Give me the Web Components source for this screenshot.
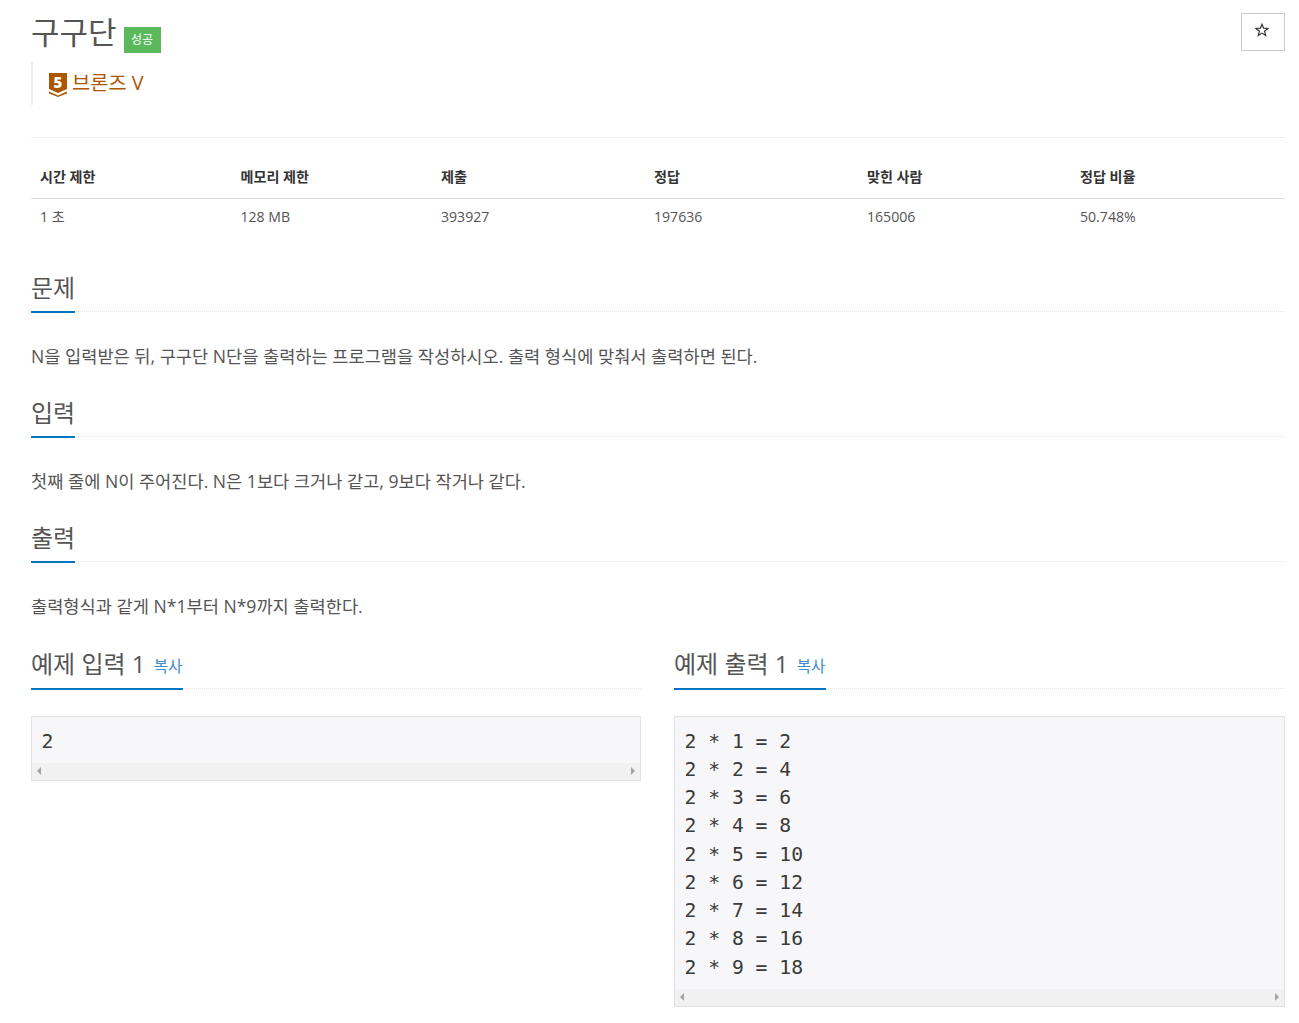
<!DOCTYPE html>
<html lang="ko">
<head>
<meta charset="utf-8">
<style>
html, body { margin: 0; background: #fff; }
body { font-family: "Open Sans", "Noto Sans CJK KR", sans-serif; color: #555; }
</style>
</head>
<body>
<problem-page></problem-page>

<script>
class ProblemHeader extends HTMLElement {
    constructor() {
        super();
        this.attachShadow({ mode: "open" });
    }

    connectedCallback() {
        this.shadowRoot.innerHTML = `
            <style>
                :host { display: block; height: 138px; border-bottom: 1px solid #eee; box-sizing: border-box; position: relative; }
                .title { display: flex; align-items: flex-start; height: 62px; }
                h1 { margin: 10px 0 0; font-size: 31px; line-height: 44px; font-weight: 400; color: #555; }
                .label { margin: 27px 0 0 7px; background: #5cb85c; color: #fff; font-size: 12px; width: 37px; height: 26px; line-height: 25px; text-align: center; }
                .tier { height: 43px; border-left: 2px solid #eee; display: flex; align-items: flex-start; padding-left: 16px; color: #ad5600; font-size: 19.8px; line-height: 42px; box-sizing: border-box; }
                .tier svg { margin: 11px 5px 0 0; flex: none; }
                button { position: absolute; top: 13px; right: 0; width: 44px; height: 38px; border: 1px solid #ccc; background: #fff; padding: 0 2px 4px 0; display: flex; align-items: center; justify-content: center; }
            </style>
            <div class="title">
                <h1>구구단</h1>
                <span class="label">성공</span>
            </div>
            <div class="tier">
                <svg width="18" height="24" viewBox="0 0 18 24">
                    <path d="M0 0H18V16L9 20L0 16Z" fill="#ad5600"/>
                    <path d="M0 18.5L9 22.5L18 18.5V20.5L9 24L0 20.5Z" fill="#ad5600"/>
                    <text x="9" y="14.5" text-anchor="middle" font-family="Open Sans" font-size="15" font-weight="800" fill="#fff">5</text>
                </svg>
                <span>브론즈 V</span>
            </div>
            <button aria-label="즐겨찾기">
                <svg width="14" height="14" viewBox="0 0 14 14"><path d="M7 1.2L8.6 5.2L12.9 5.5L9.6 8.2L10.7 12.4L7 10.1L3.3 12.4L4.4 8.2L1.1 5.5L5.4 5.2Z" fill="none" stroke="#333" stroke-width="1.2"/></svg>
            </button>
        `;
    }
}

class ProblemInfo extends HTMLElement {
    constructor() {
        super();
        this.attachShadow({ mode: "open" });
    }

    connectedCallback() {
        const heads = ["시간 제한", "메모리 제한", "제출", "정답", "맞힌 사람", "정답 비율"];
        const cells = ["1 초", "128 MB", "393927", "197636", "165006", "50.748%"];
        this.shadowRoot.innerHTML = `
            <style>
                :host { display: block; margin-top: 20px; font-size: 14.1px; color: #333; }
                .row { display: grid; grid-template-columns: 200.5px 200.5px 213px 213px 213px 1fr; }
                .row span { padding-left: 9px; }
                .head { height: 40px; line-height: 37px; font-weight: 700; border-bottom: 1px solid #ddd; }
                .body { height: 37px; line-height: 36px; color: #555; }
            </style>
            <div class="row head">${heads.map(h => `<span>${h}</span>`).join("")}</div>
            <div class="row body">${cells.map(c => `<span>${c}</span>`).join("")}</div>
        `;
    }
}

class ProblemSection extends HTMLElement {
    constructor() {
        super();
        this.attachShadow({ mode: "open" });
    }

    connectedCallback() {
        this.shadowRoot.innerHTML = `
            <style>
                :host { display: block; }
                .head { height: 38px; border-bottom: 1px dotted #e5e5e5; }
                .head h2 { display: inline-block; margin: 0; height: 38px; font-size: 24px; line-height: 30px; font-weight: 400; color: #555; border-bottom: 2px solid #0076c0; box-sizing: content-box; }
                .text { margin-top: 31px; font-size: 17.6px; line-height: 27px; height: 55px; }
            </style>
            <div class="head"><h2><slot name="title"></slot></h2></div>
            <div class="text"><slot></slot></div>
        `;
    }
}

class SampleBox extends HTMLElement {
    constructor() {
        super();
        this.attachShadow({ mode: "open" });
    }

    connectedCallback() {
        this.shadowRoot.innerHTML = `
            <style>
                :host { display: block; min-width: 0; }
                .head { height: 38px; border-bottom: 1px dotted #e5e5e5; }
                h2 { display: inline-block; margin: 0; height: 38px; font-size: 24px; line-height: 28px; font-weight: 400; color: #555; border-bottom: 2px solid #0076c0; }
                a { font-size: 15.6px; color: #428bca; margin: 0 1px 0 2px; position: relative; top: -1px; }
                .box { margin-top: 27px; border: 1px solid #e1e1e8; background: #f7f7f9; }
                pre { margin: 0; padding: 10.5px 9.5px 7px; font-family: "DejaVu Sans Mono", monospace; font-size: 19.7px; line-height: 28.25px; color: #3a3a3a; }
                .bar { height: 17px; background: #f1f1f1; display: flex; justify-content: space-between; align-items: center; padding: 0 5px; }
                i { width: 0; height: 0; border: 4px solid transparent; }
                .l { border-left: 0; border-right: 4px solid #a3a3a3; }
                .r { border-right: 0; border-left: 4px solid #a3a3a3; }
            </style>
            <div class="head"><h2><slot name="title"></slot> <a>복사</a></h2></div>
            <div class="box">
                <pre><slot></slot></pre>
                <div class="bar"><i class="l"></i><i class="r"></i></div>
            </div>
        `;
    }
}

class ProblemPage extends HTMLElement {
    constructor() {
        super();
        this.attachShadow({ mode: "open" });
    }

    connectedCallback() {
        const out = [1,2,3,4,5,6,7,8,9].map(n => `2 * ${n} = ${2 * n}`).join("\n");
        this.shadowRoot.innerHTML = `
            <style>
                :host { display: block; padding: 0 14px 0 31px; }
                .gap { height: 37px; }
                .samples { display: grid; grid-template-columns: 610px 611px; column-gap: 33px; align-items: start; margin-top: 2px; }
            </style>
            <problem-header></problem-header>
            <problem-info></problem-info>
            <div class="gap"></div>
            <problem-section><span slot="title">문제</span>N을 입력받은 뒤, 구구단 N단을 출력하는 프로그램을 작성하시오. 출력 형식에 맞춰서 출력하면 된다.</problem-section>
            <problem-section><span slot="title">입력</span>첫째 줄에 N이 주어진다. N은 1보다 크거나 같고, 9보다 작거나 같다.</problem-section>
            <problem-section><span slot="title">출력</span>출력형식과 같게 N*1부터 N*9까지 출력한다.</problem-section>
            <div class="samples">
                <sample-box><span slot="title">예제 입력 1</span>2</sample-box>
                <sample-box><span slot="title">예제 출력 1</span>${out}</sample-box>
            </div>
        `;
    }
}

customElements.define("problem-header", ProblemHeader);
customElements.define("problem-info", ProblemInfo);
customElements.define("problem-section", ProblemSection);
customElements.define("sample-box", SampleBox);
customElements.define("problem-page", ProblemPage);
</script>
</body>
</html>
